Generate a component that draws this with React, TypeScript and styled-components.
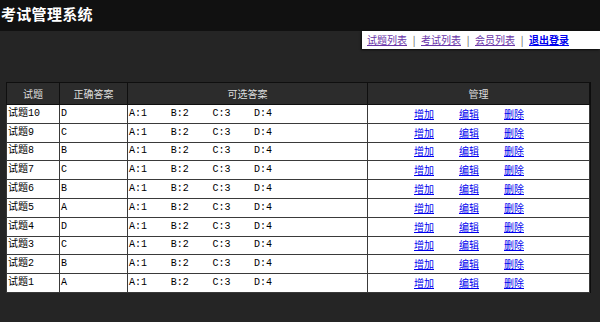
import React from "react";
import styled, { createGlobalStyle } from "styled-components";

const GlobalStyle = createGlobalStyle`
  html, body { margin: 0; padding: 0; }
  body {
    width: 600px;
    height: 322px;
    overflow: hidden;
    background: #252525;
    font-family: "Liberation Mono", "Noto Sans CJK SC", monospace;
    font-size: 10px;
  }
`;

const TopBar = styled.header`
  height: 31px;
  background: #111111;
  display: flex;
  align-items: center;
`;

const Title = styled.h1`
  margin: 0;
  padding: 0 0 4px 1px;
  font: bold 15px/20px "Noto Sans CJK SC", sans-serif;
  color: #ffffff;
  letter-spacing: 0.3px;
`;

const NavRow = styled.nav`
  display: flex;
  justify-content: flex-end;
`;

const NavBox = styled.div`
  width: 238px;
  height: 18px;
  box-sizing: border-box;
  padding-left: 5px;
  background: #ffffff;
  display: flex;
  align-items: center;
  box-shadow: -1px 1px 2px rgba(0, 0, 0, 0.7);
  font-family: "Noto Sans CJK SC", sans-serif;
  font-size: 10px;
  line-height: 12px;
`;

const NavLink = styled.a<{ $strong?: boolean }>`
  color: ${(p) => (p.$strong ? "#0000ee" : "#6a35a8")};
  font-weight: ${(p) => (p.$strong ? "bold" : "normal")};
  text-decoration: underline;
  cursor: pointer;
`;

const Sep = styled.span`
  color: #555555;
  margin: 0 4px;
  width: 6px;
  text-align: center;
`;

const Table = styled.table`
  width: 584px;
  margin: 33px 0 0 6px;
  border-collapse: collapse;
  table-layout: fixed;
  background: #ffffff;
  box-shadow: 1px 0 0 #0c0c0c;
`;

const HeadCell = styled.th<{ $w?: number }>`
  ${(p) => (p.$w ? `width: ${p.$w}px;` : "")}
  height: 21px;
  padding: 0;
  background: #2c2c2c;
  color: #dddddd;
  font-family: "Noto Sans CJK SC", sans-serif;
  font-weight: normal;
  font-size: 10px;
  text-align: center;
  border: 1px solid #0f0f0f;
`;

const Cell = styled.td`
  height: 17.8px;
  padding: 0 0 0 1px;
  border: 1px solid #3a3a3a;
  border-top-color: #9a9a9a;
  color: #000000;
  vertical-align: middle;
  line-height: 12px;
  white-space: nowrap;
  overflow: hidden;
`;

const Answers = styled.div`
  display: flex;
`;

const Answer = styled.span`
  width: 41.7px;
  flex: none;
`;

const Manage = styled.div`
  display: flex;
  justify-content: center;
  gap: 25px;
  padding-right: 20px;
  font-family: "Noto Sans CJK SC", sans-serif;
`;

const ActionLink = styled.a`
  color: #0000ee;
  text-decoration: underline;
  cursor: pointer;
`;

const rows = [
  { q: "试题10", a: "D" },
  { q: "试题9", a: "C" },
  { q: "试题8", a: "B" },
  { q: "试题7", a: "C" },
  { q: "试题6", a: "B" },
  { q: "试题5", a: "A" },
  { q: "试题4", a: "D" },
  { q: "试题3", a: "C" },
  { q: "试题2", a: "B" },
  { q: "试题1", a: "A" },
];

const options = ["A:1", "B:2", "C:3", "D:4"];

export default function App() {
  return (
    <>
      <GlobalStyle />
      <TopBar>
        <Title>考试管理系统</Title>
      </TopBar>
      <NavRow>
        <NavBox>
          <NavLink>试题列表</NavLink>
          <Sep>|</Sep>
          <NavLink>考试列表</NavLink>
          <Sep>|</Sep>
          <NavLink>会员列表</NavLink>
          <Sep>|</Sep>
          <NavLink $strong>退出登录</NavLink>
        </NavBox>
      </NavRow>
      <Table>
        <thead>
          <tr>
            <HeadCell $w={52}>试题</HeadCell>
            <HeadCell $w={67}>正确答案</HeadCell>
            <HeadCell $w={239}>可选答案</HeadCell>
            <HeadCell>管理</HeadCell>
          </tr>
        </thead>
        <tbody>
          {rows.map((r) => (
            <tr key={r.q}>
              <Cell>{r.q}</Cell>
              <Cell>{r.a}</Cell>
              <Cell>
                <Answers>
                  {options.map((o) => (
                    <Answer key={o}>{o}</Answer>
                  ))}
                </Answers>
              </Cell>
              <Cell>
                <Manage>
                  <ActionLink>增加</ActionLink>
                  <ActionLink>编辑</ActionLink>
                  <ActionLink>删除</ActionLink>
                </Manage>
              </Cell>
            </tr>
          ))}
        </tbody>
      </Table>
    </>
  );
}
